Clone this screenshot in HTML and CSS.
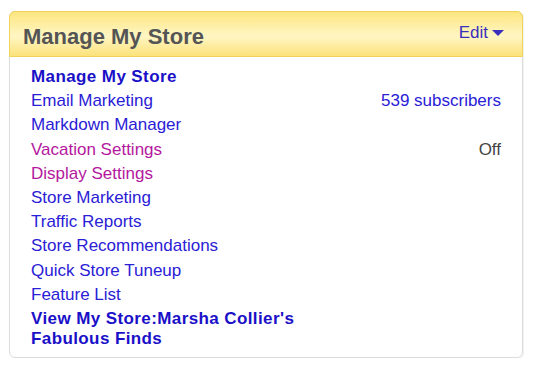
FILE: index.html
```html
<!DOCTYPE html>
<html lang="en">
<head>
    <meta charset="UTF-8">
    <title>Manage My Store</title>
    <link rel="stylesheet" href="styles.css">
</head>
<body>
    <div class="panel">
        <div class="panel-head">
            <h2>Manage My Store</h2>
            <a href="#" class="edit">Edit <span class="caret"></span></a>
        </div>
        <ul class="menu">
            <li class="strong"><a href="#">Manage My Store</a></li>
            <li><a href="#">Email Marketing</a><a href="#" class="info">539 subscribers</a></li>
            <li><a href="#">Markdown Manager</a></li>
            <li><a href="#" class="visited">Vacation Settings</a><span class="info">Off</span></li>
            <li><a href="#" class="visited">Display Settings</a></li>
            <li><a href="#">Store Marketing</a></li>
            <li><a href="#">Traffic Reports</a></li>
            <li><a href="#">Store Recommendations</a></li>
            <li><a href="#">Quick Store Tuneup</a></li>
            <li><a href="#">Feature List</a></li>
            <li class="strong wrap"><a href="#">View My Store:Marsha Collier's<br>Fabulous Finds</a></li>
        </ul>
    </div>
</body>
</html>
```

FILE: styles.css
```css
body {
    font-family: 'Liberation Sans', Arial, sans-serif;
    margin: 0;
    padding: 11px 12px 0 9px;
    background: #fff;
}
.panel {
    border: 1px solid #dcdcdc;
    border-radius: 6px;
    height: 347px;
    box-sizing: border-box;
    box-shadow: 1px 1px 1px rgba(0, 0, 0, 0.06);
}
.panel-head {
    display: flex;
    justify-content: space-between;
    align-items: center;
    height: 44px;
    padding: 0 18px 0 13px;
    margin: -1px -1px 0;
    border: 1px solid #f0d35a;
    border-radius: 6px 6px 0 0;
    background: linear-gradient(to bottom, #fde680, #fff6c4 55%, #fbe27a);
}
.panel-head h2 {
    margin: 5px 0 0;
    font-size: 22px;
    font-weight: bold;
    color: #555;
}
.edit {
    color: #3a30bc;
    text-decoration: none;
    font-size: 17px;
    display: flex;
    align-items: center;
    gap: 4px;
    margin-top: -3px;
}
.caret {
    width: 0;
    height: 0;
    margin-top: 1px;
    border-left: 6px solid transparent;
    border-right: 6px solid transparent;
    border-top: 6px solid #3a30bc;
}
.menu {
    list-style: none;
    margin: 0;
    padding: 8px 21px 0 21px;
}
.menu li {
    display: flex;
    justify-content: space-between;
    font-size: 17px;
    line-height: 24.2px;
}
.menu a {
    color: #2a20d6;
    text-decoration: none;
}
.menu a.visited {
    color: #b4179e;
}
.menu .info {
    color: #2a20d6;
}
.menu span.info {
    color: #444;
}
.menu .strong a {
    font-weight: bold;
    letter-spacing: 0.4px;
    color: #1a10c8;
}
.menu .wrap {
    line-height: 20px;
    padding-top: 2px;
}
```
